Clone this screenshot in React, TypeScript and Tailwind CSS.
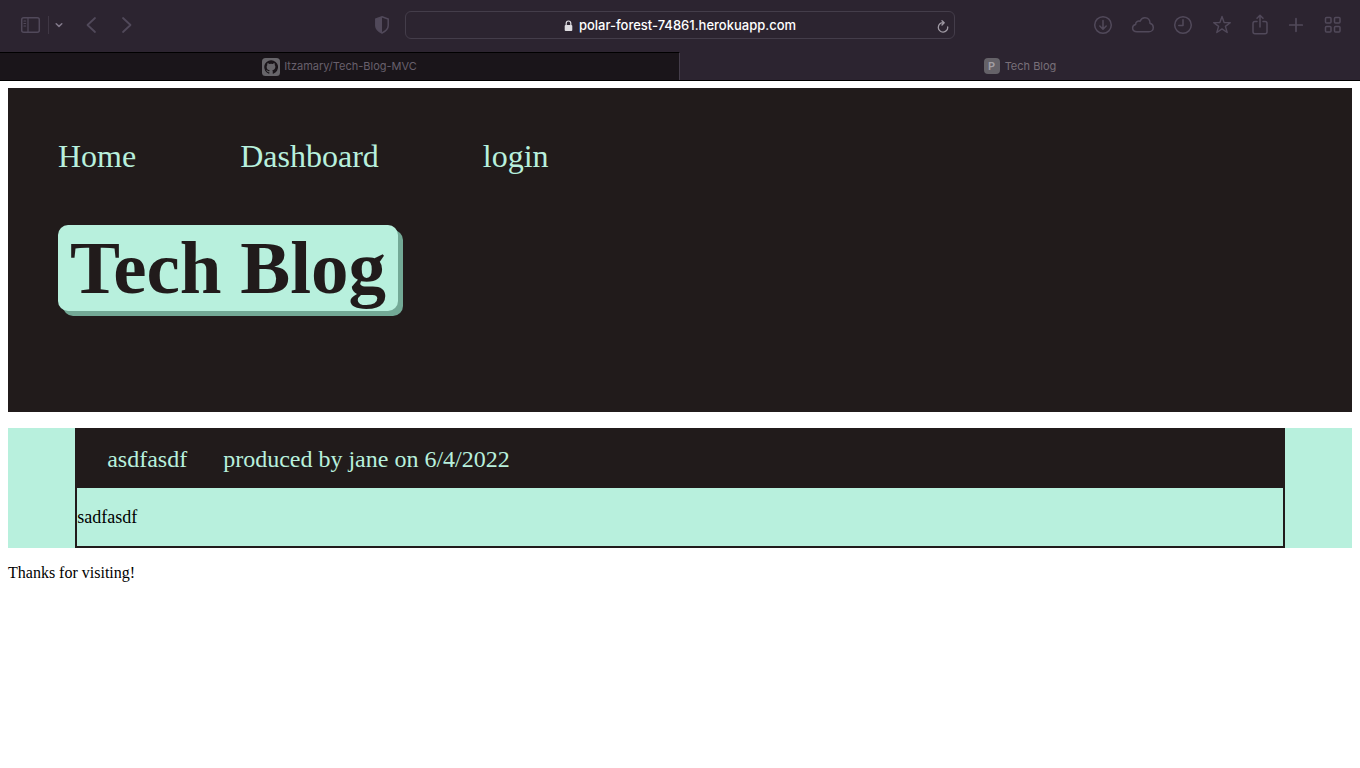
import type { ReactNode } from "react";

type IconButtonProps = {
  label: string;
  className?: string;
  children: ReactNode;
};

function IconButton({ label, className = "", children }: IconButtonProps) {
  return (
    <button type="button" aria-label={label} className={`flex h-6 shrink-0 items-center justify-center text-[#51495a] ${className}`}>
      {children}
    </button>
  );
}

const stroke = {
  fill: "none",
  stroke: "currentColor",
  strokeWidth: 1.5,
  strokeLinecap: "round" as const,
  strokeLinejoin: "round" as const,
};

function Toolbar() {
  return (
    <div className="grid h-[52px] grid-cols-[1fr_550px_1fr] items-center pb-0.5">
      <div className="flex items-center pl-[19px]">
        <IconButton label="Show sidebar" className="w-6">
          <svg width="22" height="18" viewBox="0 0 22 18" {...stroke}>
            <rect x="1.7" y="1.7" width="17.6" height="14.6" rx="2" />
            <path d="M8 1.7v14.6M4 5h1.6M4 7.5h1.6M4 10h1.6" strokeWidth="1.2" />
          </svg>
        </IconButton>
        <span className="ml-[5px] h-[18px] w-px bg-[#3f3744]" />
        <IconButton label="Tab groups" className="ml-1 w-3 text-[#82798a]">
          <svg width="10" height="8" viewBox="0 0 10 8" {...stroke}>
            <path d="M2.2 2.7 5 5.4 7.8 2.7" />
          </svg>
        </IconButton>
        <IconButton label="Back" className="ml-[18px] w-4">
          <svg width="12" height="18" viewBox="0 0 12 18" {...stroke} strokeWidth={1.8}>
            <path d="M10 2 2.500 9l7.500 7" />
          </svg>
        </IconButton>
        <IconButton label="Forward" className="ml-5 w-4">
          <svg width="12" height="18" viewBox="0 0 12 18" {...stroke} strokeWidth={1.8}>
            <path d="M2 2l7.500 7L2 16" />
          </svg>
        </IconButton>
        <IconButton label="Privacy report" className="mr-[15px] ml-auto w-4">
          <svg width="16" height="20" viewBox="0 0 16 20">
            <path d="M8 1.8 14.200 4v6.500c0 3.500-2.700 5.800-6.200 7.500-3.500-1.700-6.200-4-6.200-7.500V4Z" fill="none" stroke="currentColor" strokeWidth="1.5" />
            <path d="M8 1.800 1.800 4v6.500c0 3.500 2.700 5.800 6.200 7.500Z" fill="currentColor" />
          </svg>
        </IconButton>
      </div>

      <div className="grid h-7 grid-cols-[1fr_auto_1fr] items-center rounded-md border border-[#443d4a] text-[13px] font-medium text-white">
        <span aria-hidden="true" />
        <div className="flex items-center gap-1.5 pt-0.5">
          <svg width="9" height="12" viewBox="0 0 9 12" className="text-[#dedce0]" aria-hidden="true">
            <rect x="0.7" y="5" width="7.600" height="6" rx="1" fill="currentColor" />
            <path d="M2.200 5.300V3.300a2.300 2.300 0 0 1 4.600 0v2" fill="none" stroke="currentColor" strokeWidth="1.200" />
          </svg>
          <span>polar-forest-74861.herokuapp.com</span>
        </div>
        <button type="button" aria-label="Reload" className="mr-1 justify-self-end pt-1 text-[#a09aa4]">
          <svg width="14" height="14" viewBox="0 0 14 14" {...stroke} strokeWidth={1.3}>
            <path d="M7.500 2.700A4.700 4.700 0 1 0 11.700 7M6 .8l2.200 2L6 5" />
          </svg>
        </button>
      </div>

      <div className="flex items-center justify-end gap-4 pr-[15px]">
        <IconButton label="Downloads" className="w-6">
          <svg width="20" height="20" viewBox="0 0 20 20" {...stroke}>
            <circle cx="10" cy="10" r="8.300" />
            <path d="M10 5.500v8.500M6.800 11l3.200 3.200 3.200-3.200" />
          </svg>
        </IconButton>
        <IconButton label="iCloud tabs" className="w-6">
          <svg width="24" height="18" viewBox="0 0 24 18" {...stroke}>
            <path d="M6 15.800c-2.600 0-4.400-1.500-4.400-3.700 0-1.800 1.200-3.100 3-3.500-.1-2.600 2.300-4.300 4.500-3.400C10 3 11.900 1.700 14 1.800c3 .1 5.100 2.300 5 5.400 2 .6 3.300 2.200 3.300 4.200 0 2.500-1.900 4.400-4.400 4.400Z" />
          </svg>
        </IconButton>
        <IconButton label="History" className="w-6">
          <svg width="20" height="20" viewBox="0 0 20 20" {...stroke}>
            <circle cx="10" cy="10" r="8.300" />
            <path d="M10 4.800v5.700H5.800" />
          </svg>
        </IconButton>
        <IconButton label="Bookmarks" className="w-[22px]">
          <svg width="20" height="20" viewBox="0 0 20 20" {...stroke} strokeWidth={1.400}>
            <path d="m10 1.500 2.100 6 6.200.1-4.900 3.800 1.800 6.100L10 13.900l-5.200 3.600 1.800-6.100L1.700 7.600l6.200-.1Z" />
          </svg>
        </IconButton>
        <IconButton label="Share" className="w-[22px]">
          <svg width="18" height="22" viewBox="0 0 18 22" {...stroke}>
            <path d="M6 7.500H4a2 2 0 0 0-2 2v8.300a2 2 0 0 0 2 2h10a2 2 0 0 0 2-2V9.500a2 2 0 0 0-2-2h-2M9 13V1.500M6 4.300l3-3 3 3" />
          </svg>
        </IconButton>
        <IconButton label="New tab" className="w-[18px]">
          <svg width="16" height="16" viewBox="0 0 16 16" {...stroke} strokeWidth={1.700}>
            <path d="M8 1.700v12.600M1.700 8h12.600" />
          </svg>
        </IconButton>
        <IconButton label="Tab overview" className="w-6">
          <svg width="18" height="18" viewBox="0 0 18 18" {...stroke}>
            <rect x="1.500" y="1.500" width="5.500" height="5.500" rx="1" />
            <rect x="10.500" y="1.500" width="5.500" height="5.500" rx="1" />
            <rect x="1.500" y="10.500" width="5.500" height="5.500" rx="1" />
            <rect x="10.500" y="10.500" width="5.500" height="5.500" rx="1" />
          </svg>
        </IconButton>
      </div>
    </div>
  );
}

function TabBar() {
  return (
    <div className="grid h-[29px] grid-cols-2 border-b border-black text-[11px] text-[#68606c]">
      <button type="button" className="flex items-center justify-center gap-1 border-t border-r border-t-black border-r-[#443d4a] bg-[#1a151a]">
        <svg width="18" height="18" viewBox="0 0 18 18" aria-hidden="true">
          <rect width="18" height="18" rx="3.500" fill="#67656a" />
          <path
            transform="translate(2.200 2.200) scale(.57)"
            fill="#1a151a"
            d="M12 .3a12 12 0 0 0-3.800 23.400c.6.1.8-.3.8-.6v-2c-3.300.7-4-1.600-4-1.600-.6-1.400-1.400-1.800-1.400-1.800-1-.7.1-.7.1-.7 1.200 0 1.900 1.200 1.900 1.200 1 1.800 2.800 1.300 3.500 1 0-.8.400-1.300.7-1.600-2.700-.3-5.500-1.300-5.500-6 0-1.200.5-2.300 1.300-3.100-.2-.4-.6-1.600 0-3.200 0 0 1-.3 3.400 1.200a11.500 11.500 0 0 1 6 0c2.300-1.500 3.300-1.200 3.300-1.200.6 1.600.2 2.800 0 3.200.9.800 1.300 1.900 1.300 3.200 0 4.600-2.800 5.600-5.500 5.900.5.400.9 1.100.9 2.300v3.300c0 .3.1.7.8.6A12 12 0 0 0 12 .3"
          />
        </svg>
        <span>Itzamary/Tech-Blog-MVC</span>
      </button>
      <button type="button" className="flex items-center justify-center gap-[5px] text-[#787079]">
        <span className="flex size-4 items-center justify-center rounded bg-[#656268] text-[11px] font-semibold text-[#a29fa4]">P</span>
        <span>Tech Blog</span>
      </button>
    </div>
  );
}

export default function App() {
  return (
    <div className="min-h-screen bg-white font-['Liberation_Serif',serif] text-black">
      <div className="bg-[#2c2430] font-['Inter',sans-serif]">
        <Toolbar />
        <TabBar />
      </div>

      <div className="px-2 pt-[7px]">
        <header className="bg-[#211b1b] px-[50px] pt-[50px] pb-[101px]">
          <nav className="flex gap-[104px] text-[32px] leading-9 text-[#b8f0dd]">
            <a href="#home">Home</a>
            <a href="#dashboard">Dashboard</a>
            <a href="#login">login</a>
          </nav>
          <h1 className="mt-[51px] w-fit rounded-[10px] bg-[#b8f0dd] px-3 text-[75px] leading-[86px] font-bold text-[#211b1b] shadow-[5px_5px_0_#73a996]">
            Tech Blog
          </h1>
        </header>

        <main className="mt-4 bg-[#b8f0dd] px-[5%]">
          <article className="border-2 border-[#211b1b]">
            <h2 className="flex h-[58px] items-center gap-9 bg-[#211b1b] px-[30px] text-2xl text-[#b8f0dd]">
              <a href="#post">asdfasdf</a>
              <span>produced by jane on 6/4/2022</span>
            </h2>
            <p className="py-[19px] text-[18px] leading-5">sadfasdf</p>
          </article>
        </main>

        <footer className="mt-4 text-base leading-[18px]">Thanks for visiting!</footer>
      </div>
    </div>
  );
}
